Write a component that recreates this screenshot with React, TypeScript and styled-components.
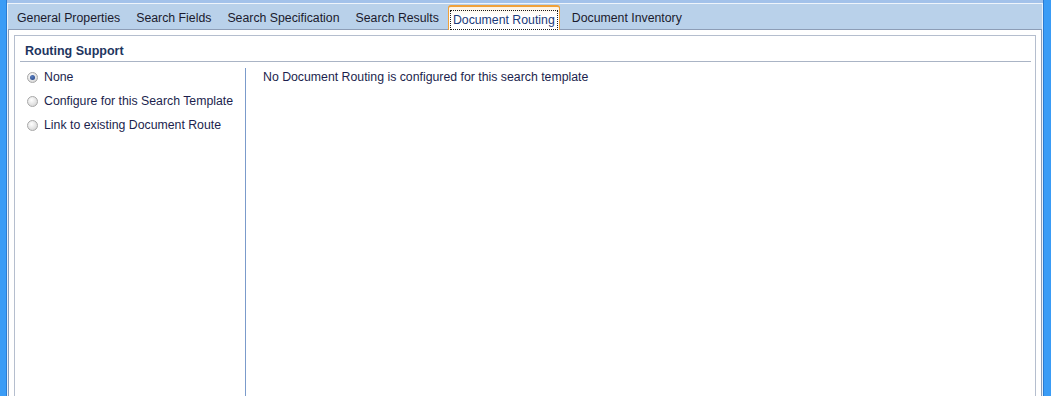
import React, { useState } from 'react';
import styled, { createGlobalStyle } from 'styled-components';

const GlobalStyle = createGlobalStyle`
  html, body {
    margin: 0;
    padding: 0;
    height: 100%;
    overflow: hidden;
  }
  #root {
    height: 100%;
  }
`;

const Shell = styled.div`
  height: 100%;
  display: flex;
  background: #3a9cf6;
  padding: 0 7px 0 6px;
  box-sizing: border-box;
  font-family: "Liberation Sans", Arial, sans-serif;
  font-size: 12.3px;
`;

const Frame = styled.div`
  flex: 1;
  display: flex;
  flex-direction: column;
  border-left: 1px solid #2a7cd2;
  border-right: 1px solid #2a7cd2;
  background: #b9d1ea;
  min-width: 0;
`;

const TopBand = styled.div`
  height: 3px;
  background: #a3c2ea;
  border-bottom: 1px solid #eef4fb;
  flex-shrink: 0;
`;

const Body = styled.div`
  flex: 1;
  display: flex;
  flex-direction: column;
  border-left: 1px solid #e9f1fa;
  border-right: 1px solid #e9f1fa;
  min-height: 0;
`;

const TabBar = styled.div`
  height: 25px;
  display: flex;
  align-items: flex-end;
  padding-left: 1px;
  flex-shrink: 0;
`;

const Tab = styled.div<{ $active?: boolean }>`
  height: 25px;
  box-sizing: border-box;
  padding: ${p => (p.$active ? '3px 1px 1px' : '3px 8px 0')};
  display: flex;
  align-items: center;
  color: ${p => (p.$active ? '#1a3a7a' : '#1b1b2e')};
  cursor: default;
  white-space: nowrap;
  margin-bottom: ${p => (p.$active ? '-1px' : '0')};
  position: relative;
  z-index: ${p => (p.$active ? 1 : 0)};
  ${p =>
    p.$active &&
    `
    margin-left: 1px;
    margin-right: 4px;
    border: 1px solid #f0a13a;
    border-bottom: none;
    border-top-width: 2px;
    border-radius: 3px 3px 0 0;
    background: linear-gradient(#fdf3e4, #ffffff 40%);
  `}
`;

const FocusRect = styled.span`
  border: 1px dotted #1a1a1a;
  padding: 2px;
  line-height: 14px;
`;

const Panel = styled.div`
  flex: 1;
  background: #ffffff;
  border: 1px solid #8d9db6;
  border-bottom: none;
  padding: 5px 5px 0 5px;
  display: flex;
  min-height: 0;
`;

const GroupBox = styled.div`
  flex: 1;
  border: 1px solid #b5bece;
  border-bottom: none;
  padding: 0 4px 0 5px;
  display: flex;
  flex-direction: column;
`;

const Heading = styled.div`
  height: 26px;
  border-bottom: 1px solid #aab4c5;
  padding-left: 5px;
  display: flex;
  align-items: center;
  padding-top: 4px;
  box-sizing: border-box;
  font-weight: bold;
  font-size: 12.5px;
  color: #1e3560;
`;

const Content = styled.div`
  flex: 1;
  display: flex;
  padding-top: 6px;
`;

const OptionList = styled.div`
  width: 226px;
  border-right: 1px solid #7b9bcb;
  display: flex;
  flex-direction: column;
  padding-left: 7px;
  box-sizing: border-box;
`;

const Option = styled.label`
  height: 24px;
  display: flex;
  align-items: center;
  gap: 6px;
  color: #1c1f4e;
  cursor: default;
  &:first-child {
    margin-top: -3px;
  }
`;

const Radio = styled.span<{ $checked?: boolean }>`
  width: 11px;
  height: 11px;
  border-radius: 50%;
  box-sizing: border-box;
  border: 1px solid #a8a8a8;
  background: radial-gradient(circle at 40% 35%, #ffffff, #dcdcdc 70%, #c8c8c8);
  display: flex;
  align-items: center;
  justify-content: center;
  flex-shrink: 0;
  &::after {
    content: '';
    display: ${p => (p.$checked ? 'block' : 'none')};
    width: 5px;
    height: 5px;
    border-radius: 50%;
    background: radial-gradient(circle at 40% 35%, #5a7fc0, #213f80);
  }
`;

const Message = styled.div`
  padding-left: 17px;
  padding-top: 2px;
  color: #1c1f4e;
  line-height: 14px;
`;

const tabs = [
  'General Properties',
  'Search Fields',
  'Search Specification',
  'Search Results',
  'Document Routing',
  'Document Inventory',
];

const options = [
  'None',
  'Configure for this Search Template',
  'Link to existing Document Route',
];

const App: React.FC = () => {
  const [activeTab, setActiveTab] = useState('Document Routing');
  const [selected, setSelected] = useState('None');

  return (
    <>
      <GlobalStyle />
      <Shell>
        <Frame>
          <TopBand />
          <Body>
            <TabBar>
              {tabs.map(tab =>
                tab === activeTab ? (
                  <Tab $active key={tab}>
                    <FocusRect>{tab}</FocusRect>
                  </Tab>
                ) : (
                  <Tab key={tab} onClick={() => setActiveTab(tab)}>
                    {tab}
                  </Tab>
                )
              )}
            </TabBar>
            <Panel>
              <GroupBox>
                <Heading>Routing Support</Heading>
                <Content>
                  <OptionList>
                    {options.map(opt => (
                      <Option key={opt} onClick={() => setSelected(opt)}>
                        <Radio $checked={selected === opt} />
                        {opt}
                      </Option>
                    ))}
                  </OptionList>
                  <Message>No Document Routing is configured for this search template</Message>
                </Content>
              </GroupBox>
            </Panel>
          </Body>
        </Frame>
      </Shell>
    </>
  );
};

export default App;
